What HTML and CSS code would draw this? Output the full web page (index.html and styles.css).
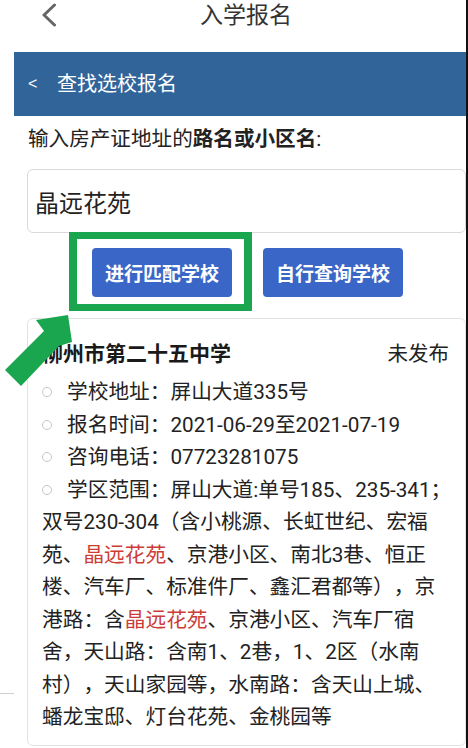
FILE: index.html
```html
<!DOCTYPE html>
<html lang="zh-CN">
<head>
<meta charset="utf-8">
<title>入学报名</title>
<link rel="stylesheet" href="styles.css">
</head>
<body>
<div class="screen">
  <header class="topbar">
    <svg class="back" width="14" height="24" viewBox="0 0 14 24"><polyline points="12.5,2 2,12 12.5,22" fill="none" stroke="#666" stroke-width="3" stroke-linecap="round" stroke-linejoin="round"/></svg>
    <h1 class="title">入学报名</h1>
  </header>
  <div class="subbar"><span class="sub-back">&lt;</span><span class="sub-title">查找选校报名</span></div>
  <main class="content">
    <p class="label">输入房产证地址的<b>路名或小区名</b>:</p>
    <div class="input">晶远花苑</div>
    <div class="actions">
      <button class="btn">进行匹配学校</button><button class="btn">自行查询学校</button>
      <div class="highlight"></div>
    </div>
    <section class="card">
      <div class="card-head"><h2 class="school">柳州市第二十五中学</h2><span class="status">未发布</span></div>
      <ul class="info">
        <li><span class="dot"></span>学校地址：屏山大道335号</li>
        <li><span class="dot"></span>报名时间：2021-06-29至2021-07-19</li>
        <li><span class="dot"></span>咨询电话：07723281075</li>
        <li><span class="dot"></span>学区范围：屏山大道:单号185、235-341；双号230-304（含小桃源、长虹世纪、宏福苑、<span class="hit">晶远花苑</span>、京港小区、南北3巷、恒正楼、汽车厂、标准件厂、鑫汇君都等），京港路：含<span class="hit">晶远花苑</span>、京港小区、汽车厂宿舍，天山路：含南1、2巷，1、2区（水南村），天山家园等，水南路：含天山上城、蟠龙宝邸、灯台花苑、金桃园等</li>
      </ul>
    </section>
  </main>
  <svg class="arrow" width="90" height="100" viewBox="0 300 90 100"><polygon points="68,315 72,342 59,346 21,386 5,370 44,331 36,320" fill="#1aa64f"/></svg>
  <div class="hairline"></div>
</div>
</body>
</html>
```

FILE: styles.css
```css
* { box-sizing: border-box; }
html, body { margin: 0; padding: 0; background: #fff; }
body {
  font-family: Roboto, "Noto Sans CJK SC", sans-serif;
  color: #222;
  text-spacing-trim: space-all;
}
.screen {
  position: relative;
  width: 468px;
  height: 748px;
  overflow: hidden;
  border-right: 2px solid #111;
  background: #fff;
}
.topbar {
  height: 52px;
  display: flex;
  align-items: flex-start;
  padding-left: 42px;
}
.back { margin-top: 3px; flex: none; }
.title {
  margin: 0 0 0 144px;
  font-size: 23px;
  line-height: 32px;
  font-weight: normal;
  color: #333;
}
.subbar {
  margin-left: 14px;
  height: 64px;
  background: #31659a;
  display: flex;
  align-items: center;
  padding-left: 14px;
  color: #fff;
}
.sub-back {
  width: 29px;
  font-size: 16px;
  line-height: 20px;
  font-family: "Liberation Sans", sans-serif;
}
.sub-title { font-size: 20px; line-height: 28px; }
.content { padding-left: 27px; }
.label {
  margin: 8px 0 0 1px;
  font-size: 20.6px;
  line-height: 30px;
}
.label b { font-weight: bold; }
.input {
  margin-top: 15px;
  height: 64px;
  border: 1px solid #dadada;
  border-radius: 6px;
  display: flex;
  align-items: center;
  padding-left: 7px;
  font-size: 24px;
  color: #222;
}
.actions {
  position: relative;
  display: flex;
  gap: 31px;
  margin-top: 15px;
  padding-left: 65px;
}
.btn {
  width: 140px;
  height: 49px;
  border: none;
  border-radius: 4px;
  background: #3a67c7;
  color: #fff;
  font-family: Roboto, "Noto Sans CJK SC", sans-serif;
  font-size: 19px;
  font-weight: bold;
  padding: 0;
}
.highlight {
  position: absolute;
  left: 42px;
  top: -16px;
  width: 183px;
  height: 79px;
  border: 8px solid #1aa64f;
  border-top-width: 7px;
  border-bottom-width: 7px;
}
.card {
  margin-top: 21px;
  border: 1px solid #e3e3e3;
  border-radius: 6px;
  padding: 20px 10px 11px 14px;
}
.card-head {
  display: flex;
  justify-content: space-between;
  align-items: center;
  height: 30px;
}
.school {
  margin: 0;
  font-size: 21px;
  font-weight: bold;
  line-height: 30px;
  color: #1a1a1a;
}
.status {
  margin-right: 6px;
  font-size: 20.5px;
  line-height: 30px;
}
.info {
  list-style: none;
  margin: 7px 0 0;
  padding: 0;
  font-size: 20.7px;
  line-height: 32.5px;
}
.dot {
  display: inline-block;
  width: 10px;
  height: 10px;
  border: 1px solid #c6c6c6;
  border-radius: 50%;
  margin-right: 15px;
  vertical-align: 2px;
}
.hit { color: #cc3d37; }
.arrow {
  position: absolute;
  left: 0;
  top: 300px;
}
.hairline {
  position: absolute;
  left: 0;
  top: 693px;
  width: 14px;
  height: 1px;
  background: #cfcfcf;
}
```
